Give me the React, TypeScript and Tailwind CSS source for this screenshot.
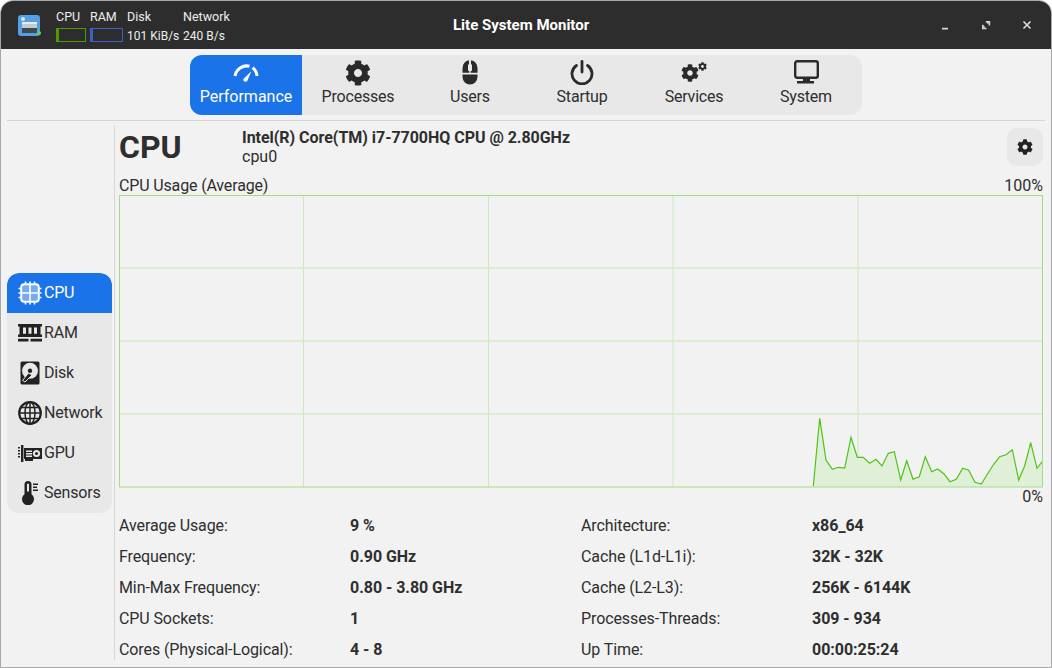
import React from "react";
import { FaCog } from "react-icons/fa";

const tabs = ["Performance", "Processes", "Users", "Startup", "Services", "System"];
const sideItems = ["CPU", "RAM", "Disk", "Network", "GPU", "Sensors"];

const leftRows = [
  ["Average Usage:", "9 %"],
  ["Frequency:", "0.90 GHz"],
  ["Min-Max Frequency:", "0.80 - 3.80 GHz"],
  ["CPU Sockets:", "1"],
  ["Cores (Physical-Logical):", "4 - 8"],
];
const rightRows = [
  ["Architecture:", "x86_64"],
  ["Cache (L1d-L1i):", "32K - 32K"],
  ["Cache (L2-L3):", "256K - 6144K"],
  ["Processes-Threads:", "309 - 934"],
  ["Up Time:", "00:00:25:24"],
];

// points read off the reference, in page px minus chart origin (119,195)
const raw: [number, number][] = [
  [40, 243], [59, 40], [78, 165], [97, 193], [115, 187], [134, 189], [153, 97], [172, 157], [190, 157], [209, 175],
  [228, 163], [246, 183], [265, 145], [283, 140], [302, 225], [320, 167], [339, 223], [358, 215], [376, 155], [395, 200],
  [413, 192], [432, 207], [450, 230], [469, 223], [488, 190], [506, 196], [525, 232], [544, 237], [562, 208], [581, 178],
  [599, 155], [618, 149], [637, 134], [656, 225], [674, 182], [692, 113], [711, 190], [727, 170],
];
const pts = raw.map(([x, y]) => `${(800 + x / 3 - 119).toFixed(1)},${(405 + y / 3 - 195).toFixed(1)}`).join(" ");

const TabIcon = ({ name, active }: { name: string; active: boolean }) => {
  const c = active ? "#ffffff" : "#2a2a2a";
  if (name === "Performance")
    return (
      <svg width="26" height="20" viewBox="0 0 26 20" fill="none">
        <path d="M2 13 A12 12 0 0 1 16.5 3.2" stroke={c} strokeWidth="3" />
        <path d="M19.6 4.6 A12 12 0 0 1 24 13" stroke={c} strokeWidth="3" />
        <path d="M10.4 16 L18.4 8.2 L14.2 18 A2.2 2.2 0 0 1 10.4 16Z" fill={c} />
      </svg>
    );
  if (name === "Processes") return <FaCog size={26} color={c} />;
  if (name === "Users")
    return (
      <svg width="16" height="25" viewBox="0 0 16 25">
        <path d="M0.5 14.5 H15.5 V16.5 A7.5 8 0 0 1 0.5 16.5Z" fill={c} />
        <path d="M0.5 12.8 V8 A7.5 8 0 0 1 7 0.2 V4 A2 2 0 0 0 6 6 V9 A2 2 0 0 0 7.4 11.5 V12.8Z M15.5 12.8 V8 A7.5 8 0 0 0 9 0.2 V4 A2 2 0 0 1 10 6 V9 A2 2 0 0 1 8.6 11.5 V12.8Z" fill={c} />
      </svg>
    );
  if (name === "Startup")
    return (
      <svg width="24" height="25" viewBox="0 0 24 25" fill="none" stroke={c} strokeWidth="2.8" strokeLinecap="round">
        <path d="M12 1.5 V12" />
        <path d="M6.5 5.5 A10 10 0 1 0 17.5 5.5" />
      </svg>
    );
  if (name === "Services")
    return (
      <span className="flex h-[25px] w-[26px] items-start relative">
        <FaCog size={18} color={c} className="mt-[4px]" />
        <FaCog size={9} color={c} className="absolute right-0 top-[2px]" />
      </span>
    );
  return (
    <svg width="25" height="25" viewBox="0 0 25 25" fill="none">
      <rect x="1.2" y="1.2" width="22.6" height="16.6" rx="2" stroke={c} strokeWidth="2.4" />
      <path d="M9 19 H16 V21 H20 V23.5 H3 V21 H9Z" fill={c} />
    </svg>
  );
};

const SideIcon = ({ name, active }: { name: string; active: boolean }) => {
  const c = active ? "#ffffff" : "#222222";
  if (name === "CPU")
    return (
      <svg width="24" height="24" viewBox="0 0 24 24" fill="none">
        <rect x="3.2" y="3.2" width="17.6" height="17.6" rx="3" stroke={c} strokeWidth="2" fill="#ffffff" fillOpacity="0.4" />
        <path d="M12 4v16 M4 12h16" stroke={c} strokeWidth="1.6" />
        <path d="M7.5 0.5v2 M12 0.5v2 M16.5 0.5v2 M7.5 21.5v2 M12 21.5v2 M16.5 21.5v2 M0.5 7.5h2 M0.5 12h2 M0.5 16.5h2 M21.5 7.5h2 M21.5 12h2 M21.5 16.5h2" stroke={c} strokeWidth="1.6" />
      </svg>
    );
  if (name === "RAM")
    return (
      <svg width="24" height="18" viewBox="0 0 24 18">
        <path d="M0 0h24v2.6h-1.5v8H24v2.4H0v-2.4h1.5v-8H0z" fill={c} />
        <path d="M5 3.5h3v6.2H5z M10.5 3.5h3v6.2h-3z M16 3.5h3v6.2h-3z" fill="#e8e8e8" />
        <path d="M0 14.8h10.5v2.7H0z M12.5 14.8H24v2.7H12.5z" fill={c} />
      </svg>
    );
  if (name === "Disk")
    return (
      <svg width="20" height="24" viewBox="0 0 20 24">
        <rect x="0.5" y="0.5" width="19" height="23" rx="1.5" fill={c} />
        <circle cx="10" cy="9.8" r="8" fill="#e8e8e8" />
        <circle cx="10" cy="9.8" r="2.2" fill={c} />
        <path d="M8.5 12 L2.5 19.5 L5 21 L12 14Z" fill={c} stroke="#e8e8e8" strokeWidth="1" />
      </svg>
    );
  if (name === "Network")
    return (
      <svg width="24" height="24" viewBox="0 0 24 24" fill="none" stroke={c} strokeWidth="1.5">
        <circle cx="12" cy="12" r="10.8" strokeWidth="2.2" />
        <ellipse cx="12" cy="12" rx="5" ry="11" />
        <path d="M12 1v22 M1 12h22 M2.5 6.5h19 M2.5 17.5h19" />
      </svg>
    );
  if (name === "GPU")
    return (
      <svg width="24" height="17" viewBox="0 0 24 17">
        <path d="M0 2h2v1.5H0z M0 5h2v1.5H0z M0 8h2v1.5H0z M0 11h2v1.5H0z" fill={c} />
        <path d="M3 0h2.4v17H3z" fill={c} />
        <path d="M6 3h18v11H15v2H7v-2H6z" fill={c} />
        <path d="M8 5.5h6v1.4H8z M8 8h6v1.4H8z M8 10.5h6v1.4H8z" fill="#e8e8e8" />
        <circle cx="18.5" cy="8.5" r="3.6" fill="#e8e8e8" />
        <circle cx="18.5" cy="8.5" r="1.5" fill={c} />
      </svg>
    );
  return (
    <svg width="17" height="24" viewBox="0 0 17 24">
      <path d="M2.5 3.5a3.5 3.5 0 0 1 7 0v9.8a6 6 0 1 1-7 0z" fill={c} />
      <path d="M5 3.5a1 1 0 0 1 2 0v7H5z" fill="#e8e8e8" />
      <path d="M11 2.5h5v1.5h-5z M11 5.5h4v1.5h-4z M11 8.5h5V10h-5z" fill={c} />
    </svg>
  );
};

const InfoRows = ({ rows }: { rows: string[][] }) => (
  <>
    {rows.map((r) => (
      <div key={r[0]} className="grid grid-cols-2 h-[31px] items-center">
        <span className="tracking-[-0.1px]">{r[0]}</span>
        <span className="font-bold tracking-[-0.04px]">{r[1]}</span>
      </div>
    ))}
  </>
);

export default function App() {
  return (
    <div
      className="w-[1052px] h-[668px] bg-white text-[#2e2e2e] overflow-hidden"
      style={{ fontFamily: "Roboto, sans-serif" }}
    >
      <div className="flex h-full flex-col rounded-t-[13px] border border-[#a8a8a8] bg-[#f2f2f2] overflow-hidden">
        {/* title bar */}
        <div className="flex h-[48px] shrink-0 items-center bg-[#2d2d2d] text-[#eeeeee] relative">
          <div className="ml-[17px] mr-[16px] h-[21px] w-[22px] rounded-[3px] bg-[#55a0e3] flex items-end justify-center relative pb-[3px]">
            <div className="absolute left-[3px] top-[2px] h-[4px] w-[4px] rounded-full bg-[#d5e6f5]"></div>
            <div className="h-[11px] w-[15px] bg-[#c4cbcf] border-t-[2px] border-[#e6ecef] flex flex-col justify-end">
              <div className="h-[5px] bg-[#3d4a52]"></div>
            </div>
            <div className="absolute -right-[0.5px] bottom-[1px] h-[4px] w-[4px] rounded-full bg-[#5fd35f]"></div>
          </div>
          <div className="grid grid-cols-[30px_33px_52px_auto] gap-x-[4px] text-[12px] leading-[16px] mt-[2px]">
            <span className="text-[12.5px]">CPU</span>
            <span className="text-[12.5px]">RAM</span>
            <span className="text-[12.5px]">Disk</span>
            <span className="text-[12.5px]">Network</span>
            <div className="mt-[3px] h-[14px] border border-[#4e9a06] bg-[#2d2d2d]">
              <div className="h-full w-[2px] bg-[#4e9a06]"></div>
            </div>
            <div className="mt-[3px] h-[14px] border border-[#3a62c4] bg-[#2d2d2d]">
              <div className="h-full w-[2px] bg-[#3a62c4]"></div>
            </div>
            <span className="mt-[3px] whitespace-nowrap">101 KiB/s</span>
            <span className="mt-[3px] whitespace-nowrap">240 B/s</span>
          </div>
          <div className="absolute left-[452px] text-[15px] font-bold text-white">Lite System Monitor</div>
          <div className="ml-auto flex items-center gap-[29px] mr-[18px]">
            <svg width="12" height="12" viewBox="0 0 12 12"><path d="M3 8.8h6v1.8H3z" fill="#d8d8d8" /></svg>
            <svg width="12" height="12" viewBox="0 0 12 12">
              <path d="M5.8 2h4.4v4.4H8.7V3.5H5.8z M2 5.8h1.5v2.9h2.9v1.5H2z M6.5 3.6H8.4V5.5z M3.6 6.5V8.4H5.5z" fill="#d8d8d8" />
            </svg>
            <svg width="12" height="12" viewBox="0 0 12 12"><path d="M2.5 2.5l7 7M9.5 2.5l-7 7" stroke="#d8d8d8" strokeWidth="1.7" /></svg>
          </div>
        </div>

        {/* tabs */}
        <div className="flex shrink-0 justify-center pt-[6px]">
          <div className="flex h-[60px] rounded-[12px] bg-[#e8e8e8]">
            {tabs.map((t, i) => (
              <div
                key={t}
                className={
                  i === 0
                    ? "flex w-[112px] flex-col items-center rounded-[12px] rounded-r-none bg-[#1a73e8] text-white"
                    : "flex w-[112px] flex-col items-center tracking-[-0.2px]"
                }
              >
                <div className="flex h-[32px] items-center justify-center pt-[3px]">
                  <TabIcon name={t} active={i === 0} />
                </div>
                <span className="text-[16px] leading-[20px]">{t}</span>
              </div>
            ))}
          </div>
        </div>
        <div className="mx-[6px] mt-[5px] h-[1px] shrink-0 bg-[#d6d6d6]"></div>

        {/* body */}
        <div className="flex min-h-0 flex-1 pt-[4px] pb-[7px]">
          <div className="ml-[6px] flex w-[105px] shrink-0 flex-col justify-center">
            <div className="mt-[1px] rounded-[12px] bg-[#e8e8e8] overflow-hidden">
              {sideItems.map((s, i) => (
                <div
                  key={s}
                  className={
                    i === 0
                      ? "flex h-[40px] items-center rounded-t-[12px] bg-[#1a73e8] text-white text-[16px] tracking-[-0.2px]"
                      : "flex h-[40px] items-center text-[16px] tracking-[-0.2px]"
                  }
                >
                  <div className="flex w-[37px] shrink-0 items-center justify-end">
                    <div className="flex w-[24px] justify-center mr-[2px]">
                      <SideIcon name={s} active={i === 0} />
                    </div>
                  </div>
                  <span>{s}</span>
                </div>
              ))}
            </div>
          </div>
          <div className="ml-[2px] w-[1px] shrink-0 bg-[#d6d6d6]"></div>

          <div className="ml-[4px] flex w-[924px] flex-col text-[16px]">
            <div className="flex h-[43px] items-start">
              <div className="w-[123px] text-[32px] font-bold leading-[44px]">CPU</div>
              <div className="flex flex-col pt-[3px] leading-[19px]">
                <span className="font-bold tracking-[-0.03px]">Intel(R) Core(TM) i7-7700HQ CPU @ 2.80GHz</span>
                <span>cpu0</span>
              </div>
              <div className="ml-auto mt-[3px] flex h-[38px] w-[36px] items-center justify-center rounded-[10px] bg-[#e8e8e8]">
                <FaCog size={16} color="#222222" />
              </div>
            </div>
            <div className="mt-[8px] flex h-[19px] justify-between leading-[19px]">
              <span className="tracking-[-0.15px]">CPU Usage (Average)</span>
              <span>100%</span>
            </div>
            <svg width="924" height="293" viewBox="0 0 924 293" className="block shrink-0">
              {[184.5, 369.5, 554, 739].map((x) => (
                <line key={x} x1={x} y1="0" x2={x} y2="292" stroke="#cdeabd" strokeWidth="1" />
              ))}
              {[73, 146, 219].map((y) => (
                <line key={y} x1="0" y1={y} x2="924" y2={y} stroke="#d3ecc5" strokeWidth="1.6" />
              ))}
              <polygon points={`${pts} 923.5,292 ${(800 + 40 / 3 - 119).toFixed(1)},292`} fill="#e0efd8" />
              <polyline points={pts} fill="none" stroke="#4ec415" strokeWidth="1.2" />
              <rect x="0.5" y="0.5" width="923" height="291.5" fill="none" stroke="#a3dc86" strokeWidth="1" />
            </svg>
            <div className="-mt-[1px] flex h-[19px] justify-end leading-[19px]">0%</div>

            <div className="mt-[4px] grid grid-cols-2 text-[16px]">
              <div>
                <InfoRows rows={leftRows} />
              </div>
              <div>
                <InfoRows rows={rightRows} />
              </div>
            </div>
          </div>
        </div>
      </div>
    </div>
  );
}
